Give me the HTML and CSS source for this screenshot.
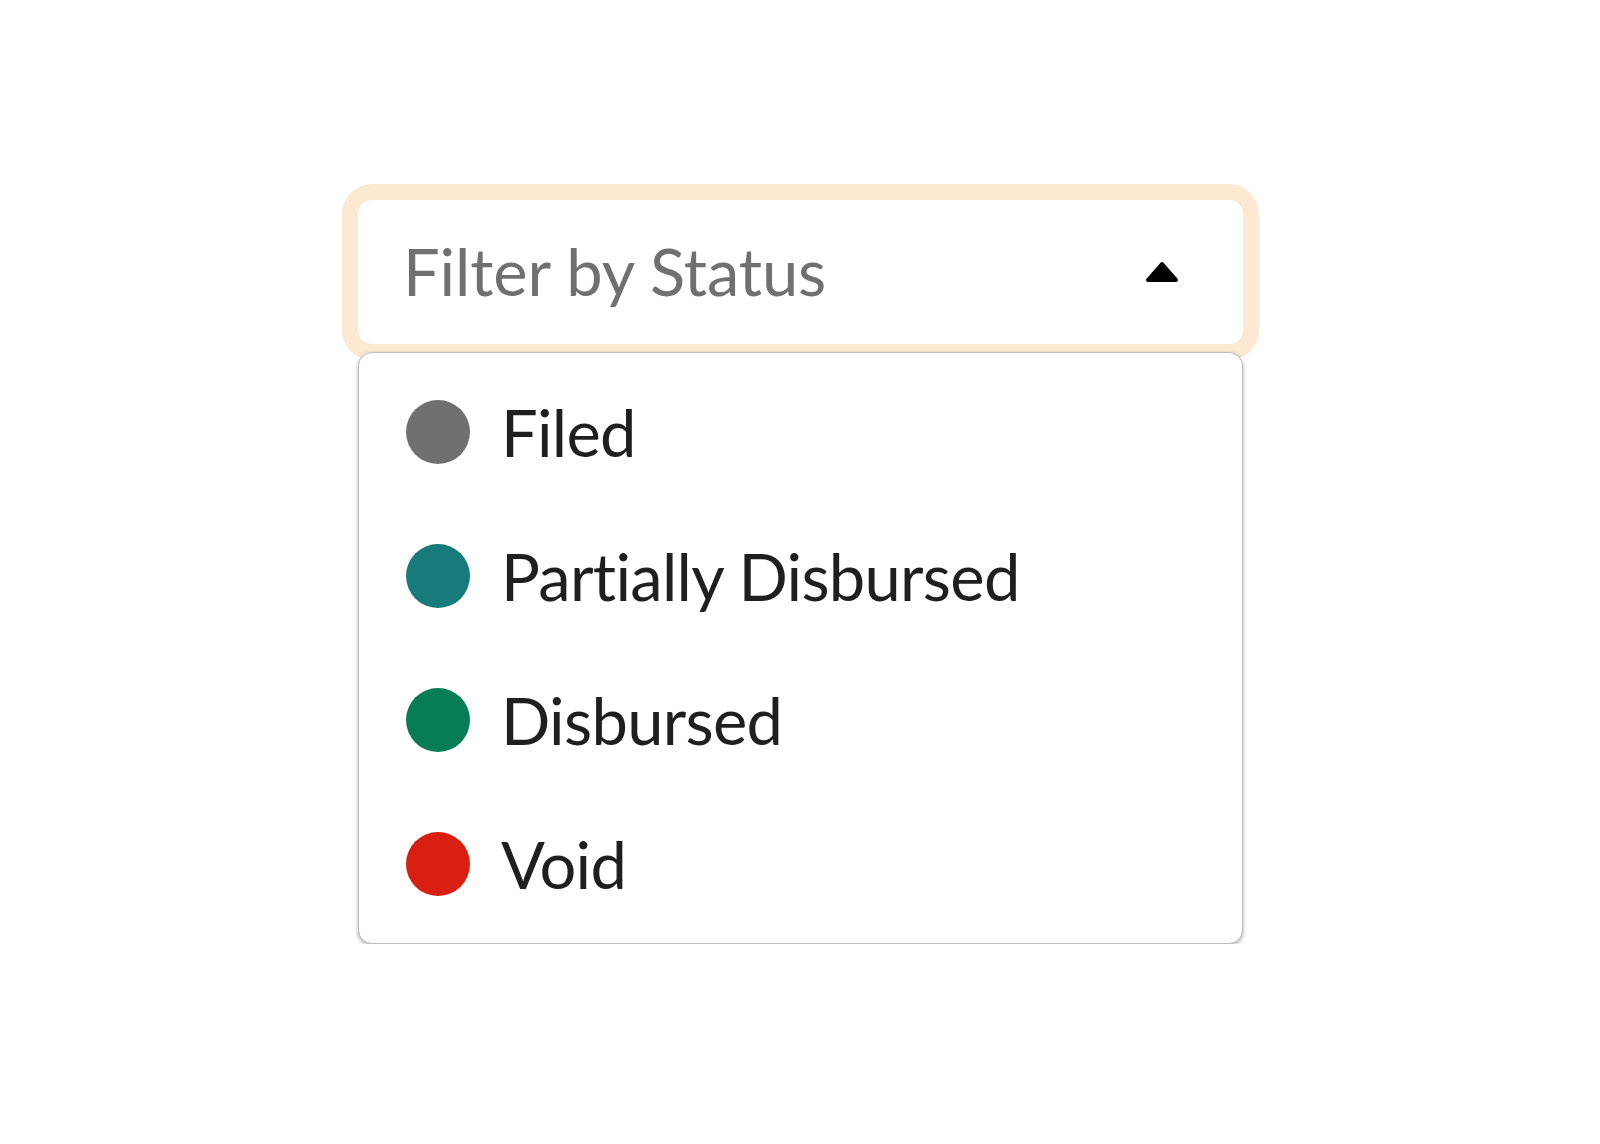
FILE: index.html
```html
<!DOCTYPE html>
<html lang="en">
<head>
    <meta charset="UTF-8">
    <meta name="viewport" content="width=device-width, initial-scale=1.0">
    <title>Filter by Status</title>
    <link rel="stylesheet" href="styles.css">
</head>
<body>

<div class="filter">
    <!-- Select box, open state -->
    <div class="select">
        <span class="placeholder">Filter by Status</span>
        <svg class="caret" width="34" height="22" viewBox="0 0 34 22">
            <path d="M17 3 L31 19 L3 19 Z" fill="#000" stroke="#000" stroke-width="4" stroke-linejoin="round"/>
        </svg>
    </div>

    <!-- Options -->
    <ul class="menu">
        <li class="option"><span class="dot dot-filed"></span>Filed</li>
        <li class="option"><span class="dot dot-partial"></span>Partially Disbursed</li>
        <li class="option"><span class="dot dot-disbursed"></span>Disbursed</li>
        <li class="option"><span class="dot dot-void"></span>Void</li>
    </ul>
</div>

</body>
</html>
```

FILE: styles.css
```css
body {
    margin: 0;
    background-color: #ffffff;
    font-family: Lato, "Noto Sans", sans-serif;
}

.filter {
    width: 885px;
    margin: 200px 0 0 358px;
}

/* Select box with focus ring */
.select {
    height: 144px;
    box-sizing: border-box;
    padding: 0 64px 0 45px;
    display: flex;
    align-items: center;
    justify-content: space-between;
    background: #ffffff;
    border-radius: 14px;
    box-shadow: 0 0 0 16px #fde9d2;
}
.placeholder {
    font-size: 65px;
    color: #707070;
    letter-spacing: -0.1px;
    margin-top: -3px;
}
.caret {
    display: block;
}

/* Dropdown list */
.menu {
    list-style: none;
    margin: 8px 0 0 0;
    padding: 7px 0;
    background: #ffffff;
    border: 1px solid #bdbdbd;
    border-radius: 14px;
    box-shadow: 0 2px 4px rgba(0, 0, 0, 0.3);
}
.option {
    height: 144px;
    display: flex;
    align-items: center;
    padding-left: 47px;
    font-size: 65px;
    color: #1f1f1f;
    letter-spacing: -0.7px;
}
.dot {
    width: 64px;
    height: 64px;
    border-radius: 50%;
    margin-right: 31px;
    flex-shrink: 0;
}
.dot-filed { background-color: #707070; }
.dot-partial { background-color: #177b7c; }
.dot-disbursed { background-color: #077d56; }
.dot-void { background-color: #d91f11; }
```
